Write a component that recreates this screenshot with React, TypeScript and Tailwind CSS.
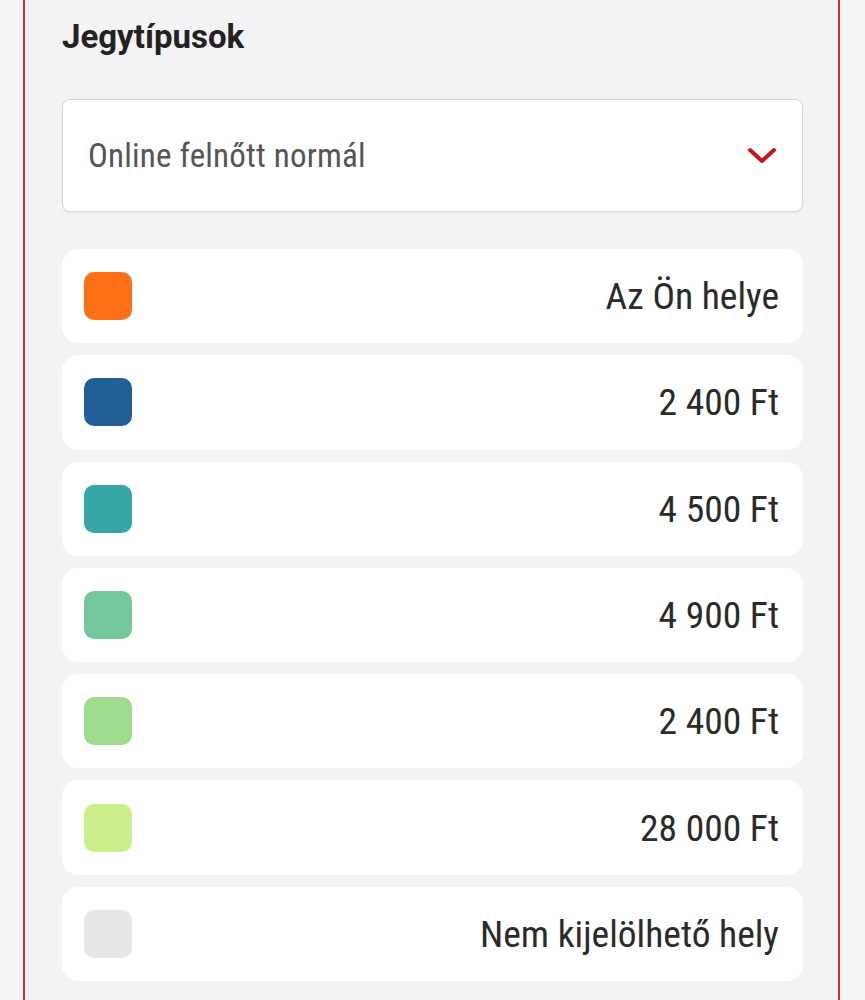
const ROWS = [
  { color: "bg-[#fd6f14]", label: "Az Ön helye" },
  { color: "bg-[#215f96]", label: "2 400 Ft" },
  { color: "bg-[#35a5a6]", label: "4 500 Ft" },
  { color: "bg-[#73c99b]", label: "4 900 Ft" },
  { color: "bg-[#9edb8d]", label: "2 400 Ft" },
  { color: "bg-[#ccee8c]", label: "28 000 Ft" },
  { color: "bg-[#e6e5e7]", label: "Nem kijelölhető hely" },
];

const condensed = {
  fontFamily: "'Roboto Condensed', 'Liberation Sans Narrow', 'DejaVu Sans Condensed', Roboto, sans-serif",
};

export default function App() {
  return (
    <div className="min-h-screen bg-[#f4f4f4]">
      <div className="ml-[23px] mr-[25px] min-h-screen border-x-2 border-[#c62f36] bg-[#f3f2f5] pl-[37px] pr-[35px] pt-[18px]">
        <h2 className="text-[33px] font-bold leading-[38px] text-[#222]" style={{ fontFamily: "Roboto, sans-serif" }}>
          Jegytípusok
        </h2>

        <div className="mt-[43px] flex h-[113px] items-center justify-between rounded-lg border border-[#d6d5d8] bg-white pl-[25px] pr-[24px] shadow-[0_1px_2px_rgba(0,0,0,0.06)]">
          <span className="text-[33px] tracking-[0.2px] text-[#555]" style={condensed}>
            Online felnőtt normál
          </span>
          <svg width="30" height="20" viewBox="0 0 30 20" className="mr-[1px]">
            <path d="M3 4 L15 15 L27 4" fill="none" stroke="#c0161e" strokeWidth="4" strokeLinecap="round" strokeLinejoin="round" />
          </svg>
        </div>

        <div className="mt-[37px] flex flex-col gap-[12px]">
          {ROWS.map((r, i) => (
            <div key={i} className="flex h-[94.3px] items-center justify-between rounded-2xl bg-white pl-[22px] pr-[24px]">
              <span className={`h-[48px] w-[48px] rounded-[10px] ${r.color}`} />
              <span className="text-[37.5px] text-[#2a2a2a]" style={condensed}>
                {r.label}
              </span>
            </div>
          ))}
        </div>
      </div>
    </div>
  );
}
